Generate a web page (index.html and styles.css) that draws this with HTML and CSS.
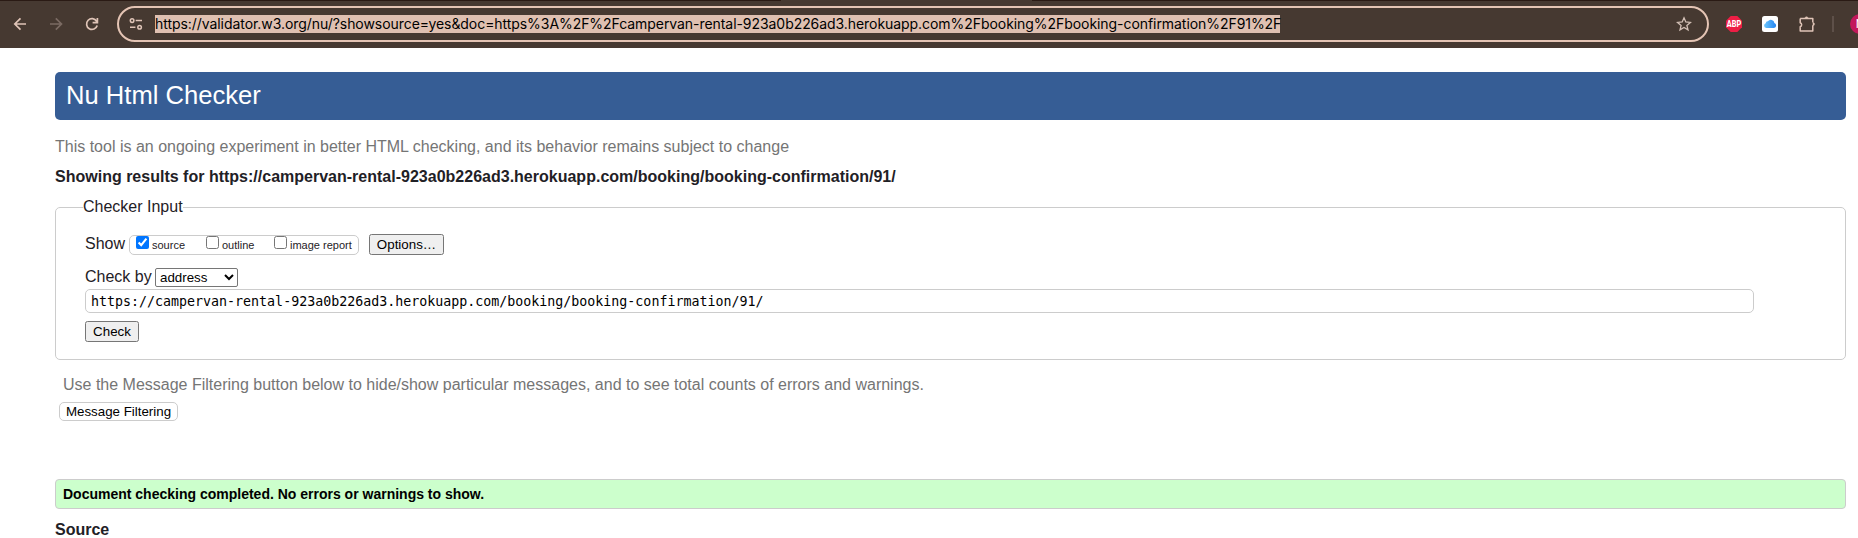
FILE: index.html
```html
<!DOCTYPE html>
<html lang="en">
<head>
<meta charset="utf-8">
<title>Nu Html Checker</title>
<link rel="stylesheet" href="styles.css">
</head>
<body>
<div class="toolbar">
  <svg class="nav" width="117" height="48" viewBox="0 0 117 48" fill="none" stroke-width="1.7">
    <path d="M26 24H15M20.5 18.3L14.8 24l5.7 5.7" stroke="#dfc4b7"/>
    <path d="M50 24h11M55.800 18.3L61.5 24l-5.7 5.7" stroke="#7b6b63"/>
    <path d="M96.600 21.200A5.400 5.400 0 1 0 97.200 25.500M97.400 18v4.600H92.600" stroke="#dfc4b7"/>
  </svg>
  <div class="omnibox">
    <svg class="tune" width="14" height="14" viewBox="0 0 14 14" fill="none" stroke="#dfc4b7" stroke-width="1.5">
      <circle cx="3.1" cy="3.6" r="1.8"/><path d="M6.7 3.6H13M1 10.2h5.4"/><circle cx="10.6" cy="10.2" r="1.8"/>
    </svg>
    <span class="url">https://validator.w3.org/nu/?showsource=yes&amp;doc=https%3A%2F%2Fcampervan-rental-923a0b226ad3.herokuapp.com%2Fbooking%2Fbooking-confirmation%2F91%2F</span>
    <svg class="star" width="16" height="16" viewBox="0 0 16 16" fill="none" stroke="#d3c0b6" stroke-width="1.3">
      <path d="M8 1.8l1.8 4.2 4.6.4-3.5 3 1.1 4.5L8 11.5l-4 2.4 1.1-4.5-3.5-3 4.6-.4z"/>
    </svg>
  </div>
  <div class="extensions">
    <svg class="abp" width="16" height="16" viewBox="0 0 16 16">
      <path d="M4.7 0h6.6L16 4.7v6.6L11.3 16H4.7L0 11.3V4.7z" fill="#ed1e45"/>
      <text x="8" y="11" text-anchor="middle" textLength="14.4" lengthAdjust="spacingAndGlyphs">ABP</text>
    </svg>
    <svg class="cloud" width="16" height="16" viewBox="0 0 16 16">
      <defs><linearGradient id="sky" x1="0" y1="0" x2="1" y2="0"><stop offset="0" stop-color="#6cc5fb"/><stop offset="1" stop-color="#2485f2"/></linearGradient></defs>
      <rect width="16" height="16" rx="2.5" fill="#fff"/>
      <path d="M4.1 12a2.5 2.5 0 0 1-.4-4.8A2.1 2.1 0 0 1 5.9 5.3 3.6 3.6 0 0 1 12.4 7 2.6 2.6 0 0 1 12 12z" fill="url(#sky)"/>
    </svg>
    <svg class="puzzle" width="18" height="18" viewBox="0 0 18 18" fill="none" stroke="#dfc4b7" stroke-width="1.5" stroke-linejoin="round">
      <path d="M2.2 3.400h12.600v4.200M14.800 10.200V16H2.200v-4.300a2.100 2.100 0 0 0 0-4V3.400"/>
      <path d="M7 3.200a1.500 1.500 0 0 1 3 0zM15 7.600a1.500 1.500 0 0 1 0 3z" fill="#dfc4b7" stroke-width=".5"/>
    </svg>
    <span class="divider"></span>
    <span class="avatar">N</span>
  </div>
</div>
<main class="page">
  <h1 class="banner"><span>Nu Html Checker</span></h1>
  <p class="about">This tool is an ongoing experiment in better HTML checking, and its behavior remains subject to change</p>
  <h2 class="results">Showing results for https://campervan-rental-923a0b226ad3.herokuapp.com/booking/booking-confirmation/91/</h2>
  <fieldset class="checker">
    <legend>Checker Input</legend>
    <div class="row show">
      <span class="label">Show</span>
      <div class="choices">
        <label class="source"><input type="checkbox" checked><span>source</span></label>
        <label class="outline"><input type="checkbox"><span>outline</span></label>
        <label class="report"><input type="checkbox"><span>image report</span></label>
      </div>
      <button class="btn options">Options…</button>
    </div>
    <div class="row by">
      <span class="label">Check by</span>
      <select><option>address</option></select>
    </div>
    <input class="address" type="text" value="https://campervan-rental-923a0b226ad3.herokuapp.com/booking/booking-confirmation/91/">
    <button class="btn check">Check</button>
  </fieldset>
  <p class="hint">Use the Message Filtering button below to hide/show particular messages, and to see total counts of errors and warnings.</p>
  <button class="filtering">Message Filtering</button>
  <p class="success">Document checking completed. No errors or warnings to show.</p>
  <h2 class="heading">Source</h2>
</main>
</body>
</html>
```
FILE: styles.css
```css
* { box-sizing: border-box; }
body {
  margin: 0;
  overflow: hidden;
  background: #fff;
  color: #1f2126;
  font: 16px/20px "Liberation Sans", Arial, sans-serif;
}
h1, h2, p { margin: 0; white-space: nowrap; }
/* The dark tab strip edge breaks where the active tab joins the toolbar. */
.toolbar {
  display: flex;
  height: 48px;
  padding-top: 1px;
  background:
    linear-gradient(90deg, #2a1a14 781px, #463931 781px 1032px, #2a1a14 1032px) 0 0 / 100% 1px no-repeat,
    #463931;
  overflow: hidden;
}
.nav { flex: none; margin-top: -1px; }
.omnibox {
  display: flex;
  align-items: center;
  flex: none;
  width: 1592px;
  height: 36px;
  margin-top: 5px;
  padding: 0 15px 0 10px;
  border: 2px solid #e4c4b4;
  border-radius: 18px;
}
.tune { flex: none; margin-right: 12px; }
.url {
  flex: none;
  width: 1125px;
  height: 18px;
  background: #dfc0b1;
  color: #000;
  font: 14px/18px Inter, sans-serif;
  letter-spacing: -0.058px;
  white-space: nowrap;
}
.star { margin-left: auto; }
.extensions { display: flex; align-items: center; flex: none; height: 46px; padding-left: 17px; }
.abp text { font: 800 8.500px Roboto, sans-serif; fill: #fff; }
.cloud { margin-left: 20px; }
.puzzle { margin-left: 20px; }
.divider { width: 2px; height: 16px; margin-left: 16px; background: #5e5049; }
.avatar {
  flex: none;
  width: 20px;
  height: 20px;
  margin-left: 16px;
  border-radius: 50%;
  background: #c2185b;
  color: #fff;
  font: 12px/20px Roboto, sans-serif;
  text-align: center;
}
.page { padding: 24px 12px 0 55px; }
.banner {
  height: 48px;
  padding-left: 11px;
  border-radius: 5px;
  background: #365d95;
  color: #fff;
  font-size: 25.600px;
  font-weight: 400;
  line-height: 46px;
}
.about { margin-top: 17px; color: #757575; }
.results { margin-top: 10px; font-size: 16px; letter-spacing: 0.005px; }
.checker {
  height: 163px;
  margin: 10px 0 0;
  padding: 17px 91px 0 29px;
  border: 1px solid #ccc;
  border-radius: 5px;
}
.checker legend { margin-left: -2px; padding: 0; }
.row { display: flex; }
.label { flex: none; line-height: 20px; }
.show .label { width: 44px; }
.choices {
  display: flex;
  width: 230px;
  height: 20px;
  margin-top: 1px;
  padding-left: 6px;
  border: 1px solid #ccc;
  border-radius: 5px;
  font-size: 11px;
}
.choices label { display: flex; flex: none; line-height: 19px; }
.choices input { flex: none; width: 13px; height: 13px; margin: 0 3px 0 0; }
.source { width: 70px; }
.outline { width: 68px; }
.btn {
  height: 21px;
  padding: 0;
  border: 1px solid #767676;
  border-radius: 2.500px;
  background: #efefef;
  color: #000;
  font: 13.333px/18px "Liberation Sans", Arial, sans-serif;
}
.options { width: 75px; margin-left: 10px; }
.by { margin-top: 12px; }
.by .label { width: 70px; }
.by select {
  width: 83px;
  height: 19px;
  margin-top: 1px;
  padding: 0;
  border: 1px solid #767676;
  border-radius: 2px;
  background: #fff;
  color: #000;
  font: 13.333px "Liberation Sans", Arial, sans-serif;
}
.address {
  display: block;
  width: 100%;
  height: 24px;
  margin-top: 2px;
  padding: 0 5px;
  border: 1px solid #ccc;
  border-radius: 5px;
  color: #000;
  font: 13.300px "DejaVu Sans Mono", monospace;
}
.check { display: block; width: 54px; margin-top: 8px; }
.hint { margin: 15px 0 0 8px; color: #757575; }
.filtering {
  display: block;
  width: 119px;
  height: 19px;
  margin: 7px 0 0 4px;
  padding: 0;
  border: 1px solid #ccc;
  border-radius: 5px;
  background: #fff;
  color: #000;
  font: 13.333px/16px "Liberation Sans", Arial, sans-serif;
}
.success {
  height: 30px;
  margin-top: 58px;
  padding-left: 7px;
  border: 1px solid #ccc;
  border-radius: 4px;
  background: #cfc;
  color: #000;
  font-size: 14px;
  font-weight: 700;
  line-height: 29px;
}
.heading { margin-top: 11px; font-size: 16px; }
```
